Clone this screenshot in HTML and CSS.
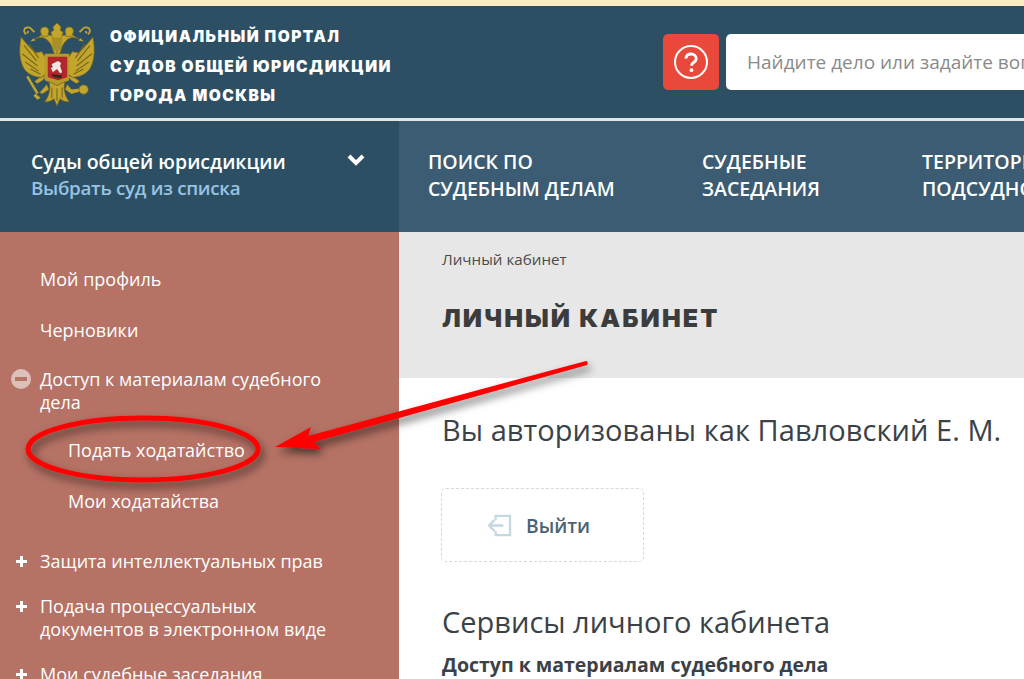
FILE: index.html
```html
<!DOCTYPE html>
<html lang="ru">
<head>
<meta charset="utf-8">
<title>Личный кабинет</title>
<link rel="stylesheet" href="styles.css">
</head>
<body>
<div class="page">
  <div class="strip"></div>
  <header class="top">
    <svg class="crest" viewBox="0 0 76 82" aria-hidden="true">
      <defs>
        <g id="half">
          <path d="M3 14C1 24 1 35 5 43c3 6 10 10 18 10l5-4-1-15-4-6-6 1C13 26 8 20 3 14z" fill="#c3a52c" stroke="#7d6c1f" stroke-width=".7"/>
          <path d="M6 22l12 15M4 30l15 12M7 38l13 9M12 45l10 5M11 21l9 13" fill="none" stroke="#76661d" stroke-width="1.100"/>
          <path d="M16 16c5-3 10-2 13 1 3 3 5 7 6 12l3 3v-16l-4-4h-4c-2-2-7-1-9 1z" fill="#c3a52c" stroke="#7d6c1f" stroke-width=".7"/>
          <path d="M17 17l-5 1 3-3z" fill="#c3a52c"/>
          <path d="M22 8c0-3 2-4 4-4s4 1 4 4l-1 5h-6z" fill="#c3a52c" stroke="#7d6c1f" stroke-width=".7"/>
          <path d="M8 11c-2-1-3-4-1-6 2-1 5-1 6 1l3 3M9 10l1-2" fill="none" stroke="#c3a52c" stroke-width="1.800"/>
          <path d="M24 56l-5 3-3-2 4-3 8-3zM28 60l-7 8 3 1 6-4z" fill="#c3a52c" stroke="#7d6c1f" stroke-width=".5"/>
        </g>
      </defs>
      <use href="#half"/>
      <use href="#half" transform="translate(76 0) scale(-1 1)"/>
      <path d="M34 4l4-4 4 4-1 3 3 2-2 6h-8l-2-6 3-2z" fill="#c3a52c" stroke="#7d6c1f" stroke-width=".6"/>
      <path d="M33 15h10l-1 12h-8z" fill="#a98f27"/>
      <path d="M26 30h24v26l-12 5-12-5z" fill="#b89c2a"/>
      <path d="M30 57c2 6 1 13-4 20 4 0 7-1 9-3l3 7 3-7c2 2 5 3 9 3-5-7-6-14-4-20l-8 4z" fill="#c3a52c" stroke="#6f6120" stroke-width=".7"/>
      <path d="M33 63v10M38 64v12M43 63v10" stroke="#6f6120" stroke-width="1"/>
      <path d="M9 52l10 17" stroke="#c3a52c" stroke-width="2.400"/>
      <path d="M17 69l5 4-3 2-4-4z" fill="#c3a52c"/>
      <path d="M52 65l8-1v3l-8 2z" fill="#c3a52c"/>
      <circle cx="64" cy="65" r="4.500" fill="#c3a52c" stroke="#7d6c1f" stroke-width=".7"/>
      <path d="M29 33h19v20l-9 3-10-3z" fill="#b3262b"/>
      <path d="M33 40l6-3 3 2-1 3 2 6-2 1-3-4-4 3-2-4 2-1-1-2z" fill="#efe7e2"/>
      <path d="M32 50l11 1-1 3-7-1z" fill="#35261f"/>
    </svg>
    <div class="portal">
      <div>Официальный портал</div>
      <div>судов общей юрисдикции</div>
      <div>города Москвы</div>
    </div>
    <div class="help">
      <svg viewBox="0 0 36 36" aria-hidden="true">
        <circle cx="18" cy="18" r="16" fill="none" stroke="#fff" stroke-width="2"/>
        <path d="M12.800 14.600c.3-3 2.400-4.600 5.200-4.600 3 0 5.200 1.800 5.200 4.400 0 2-1 3-2.700 4.100-1.500 1-1.900 1.700-1.900 3.200" fill="none" stroke="#fff" stroke-width="2.800"/>
        <circle cx="18.500" cy="26.200" r="1.900" fill="#fff"/>
      </svg>
    </div>
    <div class="search">Найдите дело или задайте вопрос</div>
  </header>
  <nav class="nav">
    <div class="courts">
      <div class="courts-text">
        <div class="courts-title">Суды общей юрисдикции</div>
        <div class="courts-link">Выбрать суд из списка</div>
      </div>
      <svg class="chevron" viewBox="0 0 20 14" aria-hidden="true"><path d="M3 3l7 7 7-7" fill="none" stroke="#fff" stroke-width="4"/></svg>
    </div>
    <div class="menu">
      <div class="menu-item m1">Поиск по<br>судебным делам</div>
      <div class="menu-item m2">Судебные<br>заседания</div>
      <div class="menu-item m3">Территориальная<br>подсудность</div>
    </div>
  </nav>
  <div class="body">
    <aside class="side">
      <div class="s-item s-first">Мой профиль</div>
      <div class="s-item s-drafts">Черновики</div>
      <div class="s-item s-open"><span class="minus"></span>Доступ к материалам судебного дела</div>
      <div class="s-sub s-sub1">Подать ходатайство</div>
      <div class="s-sub s-sub2">Мои ходатайства</div>
      <div class="s-item s-p1"><span class="plus"></span>Защита интеллектуальных прав</div>
      <div class="s-item s-p2"><span class="plus"></span>Подача процессуальных<br>документов в электронном виде</div>
      <div class="s-item s-p3"><span class="plus"></span>Мои судебные заседания</div>
    </aside>
    <main class="main">
      <div class="crumbs">
        <div class="crumb">Личный кабинет</div>
        <h1>Личный кабинет</h1>
      </div>
      <div class="content">
        <h2>Вы авторизованы как Павловский Е. М.</h2>
        <div class="logout">
          <svg viewBox="0 0 28 24" aria-hidden="true">
            <path d="M10 6V2h15v20H10v-4" fill="none" stroke="#c3d8df" stroke-width="2.400"/>
            <path d="M18 12H3M9 6l-6 6 6 6" fill="none" stroke="#c3d8df" stroke-width="2.400"/>
          </svg>
          <span>Выйти</span>
        </div>
        <h3>Сервисы личного кабинета</h3>
        <h4>Доступ к материалам судебного дела</h4>
      </div>
    </main>
  </div>
  <svg class="note" viewBox="0 0 1024 679" aria-hidden="true">
    <defs>
      <filter id="sh" x="-20%" y="-20%" width="140%" height="160%">
        <feDropShadow dx="3" dy="5" stdDeviation="4" flood-color="#000" flood-opacity=".55"/>
      </filter>
    </defs>
    <g filter="url(#sh)">
      <ellipse cx="143" cy="449" rx="115" ry="31" fill="none" stroke="#f00" stroke-width="5"/>
      <path d="M275 447l36-20-3 9 278-75c2 0 2 3 1 4L314 442l7 7z" fill="#f00"/>
    </g>
  </svg>
</div>
</body>
</html>
```
FILE: styles.css
```css
* { box-sizing: border-box; }
html, body { margin: 0; padding: 0; }
body { font-family: "Open Sans", "Liberation Sans", sans-serif; background: #fff; }
.page { position: relative; width: 1024px; height: 679px; overflow: hidden; }
.strip { height: 6px; background: #f9edc1; }
.top { height: 112px; background: #2c4f64; display: flex; align-items: center; white-space: nowrap; }
.crest { width: 78px; height: 84px; margin: 6px 0 0 18px; flex: none; filter: blur(.4px); }
.portal { margin-left: 14px; padding-top: 9px; width: 553px; flex: none; font-family: Inter, "Liberation Sans", sans-serif; font-weight: 900; font-size: 15.5px; line-height: 29.5px; letter-spacing: 1.45px; color: #fff; text-transform: uppercase; }
.help { width: 56px; height: 56px; background: #e9493b; border-radius: 5px; display: flex; align-items: center; justify-content: center; flex: none; }
.help svg { width: 36px; height: 36px; }
.search { margin-left: 7px; width: 500px; height: 56px; flex: none; background: #fff; border-radius: 5px; padding-left: 21px; line-height: 56px; font-size: 19px; color: #8a8a8a; }
.nav { height: 114px; border-top: 3px solid #dfe6ea; display: flex; white-space: nowrap; }
.courts { width: 399px; flex: none; background: #2c4f64; display: flex; padding: 27px 33px 0 31px; justify-content: space-between; }
.courts-title { font-size: 19.5px; font-weight: 600; line-height: 27px; color: #fff; }
.courts-link { font-size: 18.800px; font-weight: 600; line-height: 27px; color: #98c3e2; letter-spacing: -.3px; }
.chevron { width: 20px; height: 14px; margin-top: 5px; }
.menu { flex: 1; background: #3b5c73; display: flex; padding-top: 27px; min-width: 0; overflow: hidden; }
.menu-item { font-size: 19.5px; font-weight: 600; line-height: 27px; color: #fff; text-transform: uppercase; flex: none; }
.m1 { margin-left: 29px; width: 274px; }
.m2 { width: 220px; }
.body { display: flex; height: 447px; }
.side { width: 399px; flex: none; background: #b57265; color: #fff; font-size: 18px; line-height: 23px; overflow: hidden; padding: 36px 0 0 40px; }
.s-item { position: relative; width: 320px; }
.s-drafts { margin-top: 28px; }
.s-open { margin-top: 26px; }
.s-sub { padding-left: 28px; }
.s-sub1 { margin-top: 25px; }
.s-sub2 { margin-top: 28px; }
.s-p1 { margin-top: 37px; }
.s-p2 { margin-top: 22px; width: 340px; }
.s-p3 { margin-top: 22px; }
.minus { position: absolute; left: -29px; top: 1px; width: 20px; height: 20px; border-radius: 50%; background: #dcc0ba; }
.minus::after { content: ""; position: absolute; left: 4px; top: 8px; width: 12px; height: 4px; background: #b57265; }
.plus { position: absolute; left: -24px; top: 6px; width: 11px; height: 11px; background: linear-gradient(#fff, #fff) center / 11px 3px no-repeat, linear-gradient(#fff, #fff) center / 3px 11px no-repeat; }
.main { flex: 1; min-width: 0; }
.crumbs { height: 146px; background: #e7e7e7; padding: 18px 0 0 43px; }
.crumb { font-size: 15.2px; line-height: 19px; color: #4a4a4a; }
h1 { margin: 31px 0 0; font-family: Inter, "Liberation Sans", sans-serif; font-weight: 900; font-size: 25px; line-height: 36px; letter-spacing: 2.1px; text-transform: uppercase; color: #3c3c3c; }
.content { padding: 32px 0 0 43px; color: #3a4247; white-space: nowrap; }
h2 { margin: 0; font-size: 29px; font-weight: 400; line-height: 40px; letter-spacing: .05px; }
.logout { margin-top: 38px; margin-left: -1px; width: 203px; height: 74px; border: 1px dashed #d8d8d8; border-radius: 5px; display: flex; align-items: center; padding-left: 44px; font-size: 19.2px; font-weight: 600; color: #4a6375; }
.logout svg { width: 27px; height: 23px; margin-right: 13px; }
h3 { margin: 40px 0 0; font-size: 29px; font-weight: 400; line-height: 40px; }
h4 { margin: 10px 0 0; font-size: 19.5px; font-weight: 700; line-height: 26px; }
.note { position: absolute; left: 0; top: 0; width: 1024px; height: 679px; pointer-events: none; }
```
